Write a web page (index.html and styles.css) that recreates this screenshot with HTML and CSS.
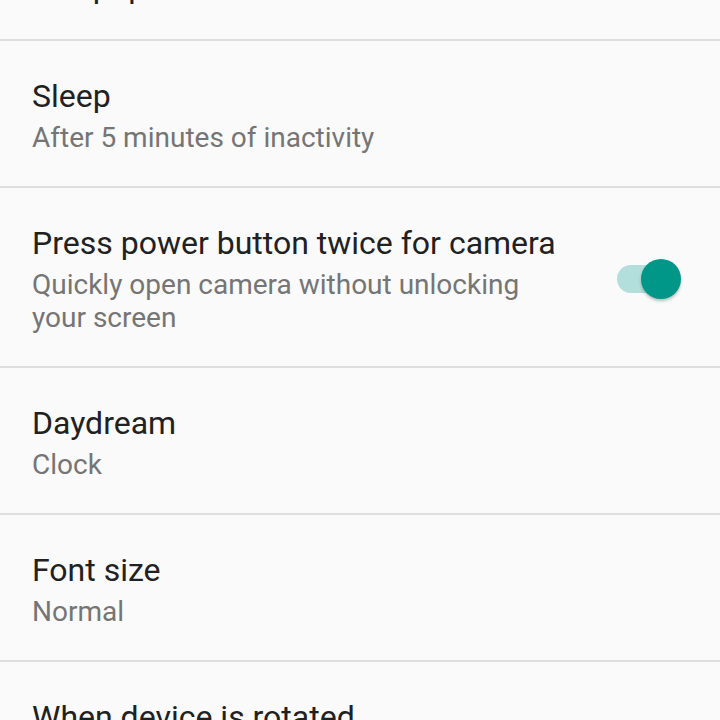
FILE: index.html
```html
<!DOCTYPE html>
<html>
<head>
<meta charset="utf-8">
<link rel="stylesheet" href="styles.css">
</head>
<body>
<div class="list">
  <div class="row single">
    <div class="text"><div class="title">Wallpaper</div></div>
  </div>
  <div class="row">
    <div class="text">
      <div class="title">Sleep</div>
      <div class="summary">After 5 minutes of inactivity</div>
    </div>
  </div>
  <div class="row">
    <div class="text">
      <div class="title">Press power button twice for camera</div>
      <div class="summary">Quickly open camera without unlocking your screen</div>
    </div>
    <div class="switch"><span class="track"></span><span class="thumb"></span></div>
  </div>
  <div class="row">
    <div class="text">
      <div class="title">Daydream</div>
      <div class="summary">Clock</div>
    </div>
  </div>
  <div class="row">
    <div class="text">
      <div class="title">Font size</div>
      <div class="summary">Normal</div>
    </div>
  </div>
  <div class="row">
    <div class="text">
      <div class="title">When device is rotated</div>
      <div class="summary">Rotate the contents of the screen</div>
    </div>
  </div>
</div>
</body>
</html>
```

FILE: styles.css
```css
html, body {
  margin: 0;
  padding: 0;
  background: #fafafa;
  overflow: hidden;
  height: 720px;
}
.list {
  margin-top: -68px;
  font-family: Roboto, "Noto Sans", sans-serif;
}
.row {
  display: flex;
  align-items: center;
  padding: 35px 39px 32px 32px;
  border-bottom: 2px solid #dedede;
}
.text {
  flex: 1;
  min-width: 0;
}
.title {
  font-size: 32px;
  line-height: 40px;
  color: #212121;
}
.summary {
  margin-top: 5px;
  font-size: 28px;
  line-height: 33px;
  color: #757575;
  max-width: 530px;
}
.switch {
  position: relative;
  width: 64px;
  height: 40px;
  margin-left: 40px;
  flex: none;
}
.track {
  position: absolute;
  left: 0;
  top: 6px;
  width: 56px;
  height: 28px;
  border-radius: 14px;
  background: #b2dfdb;
}
.thumb {
  position: absolute;
  right: 0;
  top: 0;
  width: 40px;
  height: 40px;
  border-radius: 50%;
  background: #009688;
  box-shadow: 0 2px 3px rgba(0,0,0,0.25);
}
```
